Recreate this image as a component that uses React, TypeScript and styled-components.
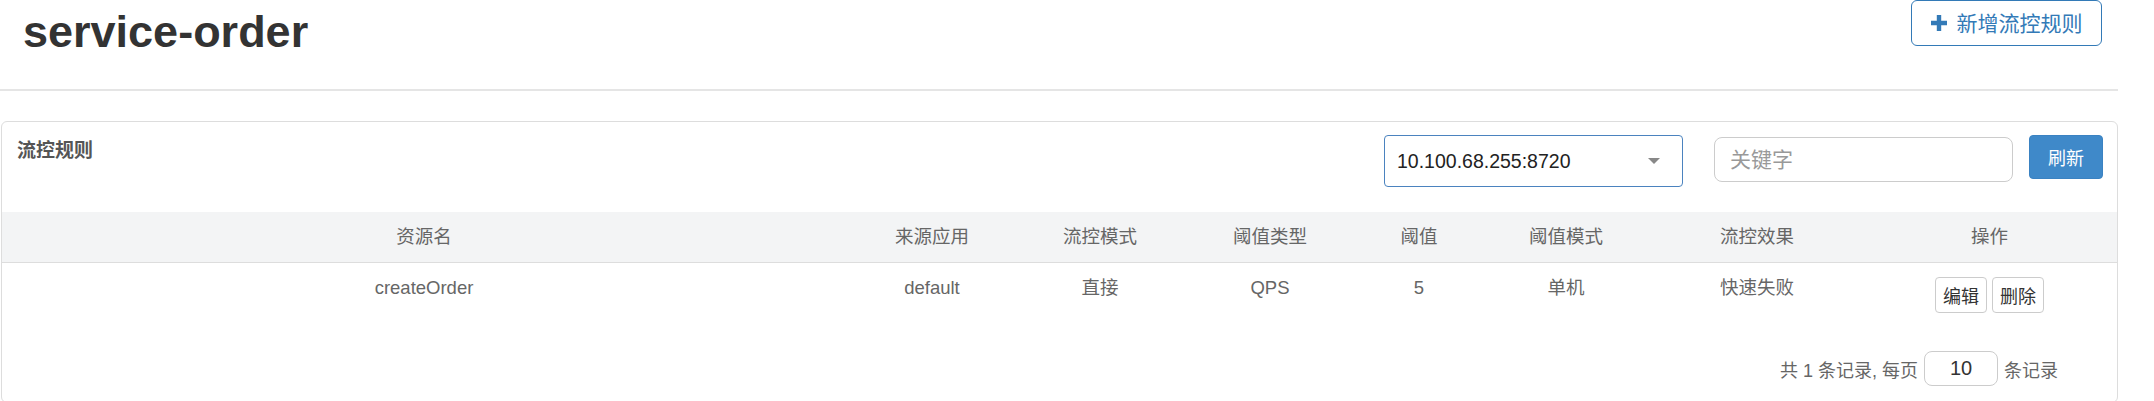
import React from "react";
import styled, { createGlobalStyle } from "styled-components";

const GlobalStyle = createGlobalStyle`
  html, body {
    margin: 0;
    padding: 0;
    background: #ffffff;
  }
  body {
    font-family: "Liberation Sans", "Noto Sans CJK SC", Arial, sans-serif;
    color: #333333;
  }
  * { box-sizing: border-box; }
`;

const FONT = `"Liberation Sans", "Noto Sans CJK SC", Arial, sans-serif`;

const Page = styled.div`
  width: 2118px;
`;

const Header = styled.header`
  display: flex;
  justify-content: space-between;
  align-items: flex-start;
  height: 91px;
  padding: 0 16px 0 23px;
  border-bottom: 2px solid #e5e5e5;
`;

const Title = styled.h1`
  margin: 7px 0 0 0;
  font-family: ${FONT};
  font-size: 45px;
  line-height: 49.5px;
  font-weight: 700;
  color: #333333;
`;

const AddButton = styled.button`
  display: flex;
  align-items: center;
  justify-content: center;
  gap: 10px;
  width: 191px;
  height: 46px;
  margin: 0;
  padding: 0;
  background: #ffffff;
  border: 1px solid #337ab7;
  border-radius: 6px;
  color: #337ab7;
  font-family: ${FONT};
  font-size: 21px;
  line-height: 1;
  cursor: pointer;
`;

const Panel = styled.section`
  margin: 30px 0 0 1px;
  width: 2117px;
  border: 1px solid #dddddd;
  border-radius: 6px;
  padding-bottom: 16px;
`;

const PanelHeading = styled.div`
  display: flex;
  align-items: flex-start;
  height: 90px;
  padding: 13px 14px 0 15px;
`;

const PanelTitle = styled.h3`
  flex: 1;
  margin: 3px 0 0 0;
  font-family: ${FONT};
  font-size: 19px;
  line-height: 26px;
  font-weight: 700;
  color: #555555;
`;

const Select = styled.div`
  display: flex;
  align-items: center;
  justify-content: space-between;
  width: 299px;
  height: 52px;
  padding: 0 22px 0 12px;
  border: 1px solid #4b83bf;
  border-radius: 4px;
  font-family: ${FONT};
  font-size: 19.5px;
  color: #222222;
`;

const Caret = styled.span`
  width: 0;
  height: 0;
  border-left: 6px solid transparent;
  border-right: 6px solid transparent;
  border-top: 6px solid #888888;
`;

const SearchInput = styled.input`
  margin: 2px 0 0 31px;
  width: 299px;
  height: 45px;
  padding: 0 15px;
  border: 1px solid #cccccc;
  border-radius: 8px;
  font-family: ${FONT};
  font-size: 21px;
  color: #333333;
  outline: none;
  &::placeholder {
    color: #999999;
  }
`;

const PrimaryButton = styled.button`
  margin: 0 0 0 16px;
  width: 74px;
  height: 44px;
  padding: 0;
  border: 1px solid #3a82c2;
  border-radius: 4px;
  background: #3f89c9;
  color: #ffffff;
  font-family: ${FONT};
  font-size: 18px;
  cursor: pointer;
`;

const COLS = "844px 172px 164px 176px 122px 172px 210px 1fr";

const HeadRow = styled.div`
  display: grid;
  grid-template-columns: ${COLS};
  align-items: center;
  height: 51px;
  background: #f3f4f5;
  border-bottom: 1px solid #dddddd;
`;

const HeadCell = styled.div`
  text-align: center;
  font-family: ${FONT};
  font-size: 18.5px;
  line-height: 26px;
  color: #666666;
`;

const BodyRow = styled.div`
  display: grid;
  grid-template-columns: ${COLS};
  align-items: start;
  height: 60px;
`;

const BodyCell = styled.div`
  padding-top: 12px;
  text-align: center;
  font-family: ${FONT};
  font-size: 18.5px;
  line-height: 26px;
  color: #666666;
`;

const ActionCell = styled.div`
  display: flex;
  justify-content: center;
  gap: 5px;
  padding-top: 14px;
`;

const SmallButton = styled.button`
  width: 52px;
  height: 36px;
  padding: 0;
  background: #ffffff;
  border: 1px solid #cccccc;
  border-radius: 4px;
  font-family: ${FONT};
  font-size: 18px;
  color: #333333;
  cursor: pointer;
`;

const Pager = styled.div`
  display: flex;
  justify-content: flex-end;
  align-items: center;
  gap: 6px;
  padding: 28px 59px 0 0;
  font-family: ${FONT};
  font-size: 18px;
  color: #666666;
`;

const PageSize = styled.input`
  width: 74px;
  height: 35px;
  border: 1px solid #cccccc;
  border-radius: 8px;
  text-align: center;
  font-family: ${FONT};
  font-size: 20px;
  color: #333333;
  outline: none;
`;

const PlusIcon = () => (
  <svg width="16" height="16" viewBox="0 0 16 16" aria-hidden="true">
    <path d="M5.8 0h4.4v5.8H16v4.4h-5.8V16H5.8v-5.8H0V5.8h5.8z" fill="#337ab7" />
  </svg>
);

const headers = ["资源名", "来源应用", "流控模式", "阈值类型", "阈值", "阈值模式", "流控效果", "操作"];
const rows = [
  ["createOrder", "default", "直接", "QPS", "5", "单机", "快速失败"],
];

export default function App() {
  return (
    <Page>
      <GlobalStyle />
      <Header>
        <Title>service-order</Title>
        <AddButton>
          <PlusIcon />
          新增流控规则
        </AddButton>
      </Header>
      <Panel>
        <PanelHeading>
          <PanelTitle>流控规则</PanelTitle>
          <Select>
            <span>10.100.68.255:8720</span>
            <Caret />
          </Select>
          <SearchInput placeholder="关键字" />
          <PrimaryButton>刷新</PrimaryButton>
        </PanelHeading>
        <HeadRow>
          {headers.map((h) => (
            <HeadCell key={h}>{h}</HeadCell>
          ))}
        </HeadRow>
        {rows.map((r) => (
          <BodyRow key={r[0]}>
            {r.map((c, i) => (
              <BodyCell key={i}>{c}</BodyCell>
            ))}
            <ActionCell>
              <SmallButton>编辑</SmallButton>
              <SmallButton>删除</SmallButton>
            </ActionCell>
          </BodyRow>
        ))}
        <Pager>
          <span>共 1 条记录, 每页</span>
          <PageSize defaultValue="10" />
          <span>条记录</span>
        </Pager>
      </Panel>
    </Page>
  );
}
